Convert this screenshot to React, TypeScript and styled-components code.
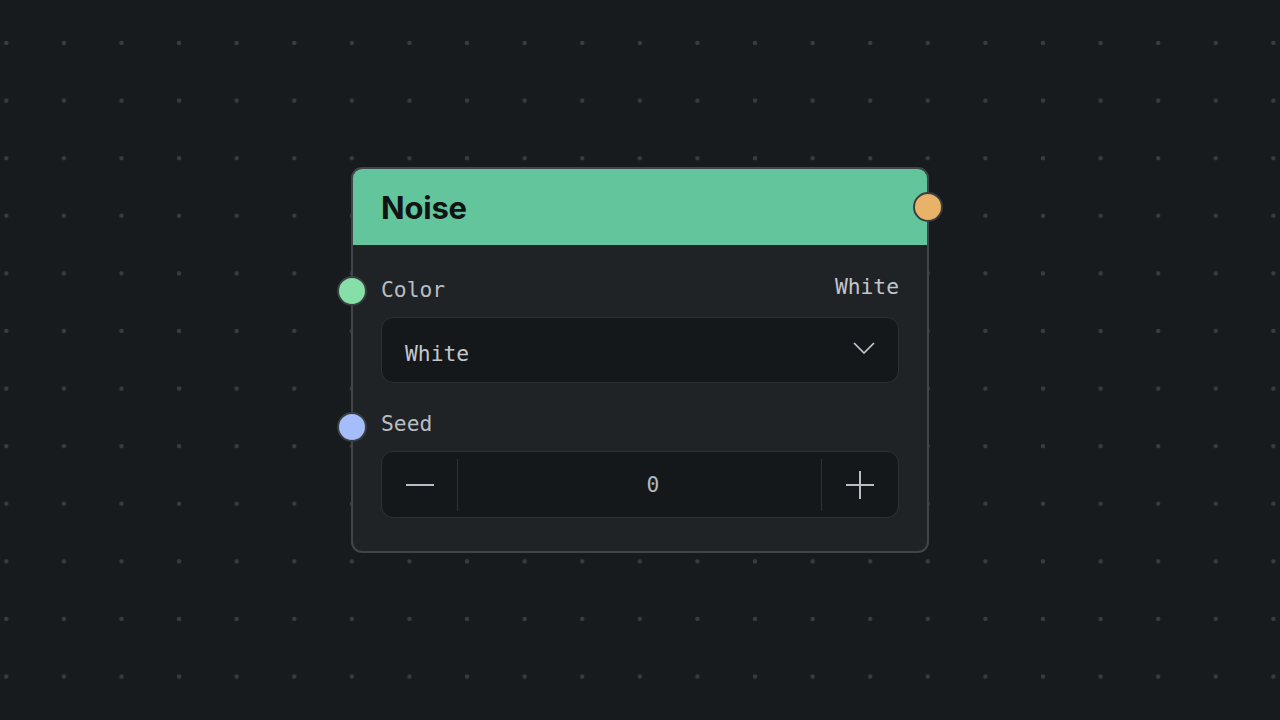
import React, { useState } from "react";
import styled, { createGlobalStyle } from "styled-components";

const GlobalStyle = createGlobalStyle`
    html, body {
        margin: 0;
        padding: 0;
        background: #181b1e;
    }
`;

const mono = `"DejaVu Sans Mono", "Liberation Mono", monospace`;

const Canvas = styled.div`
    width: 100vw;
    height: 100vh;
    display: flex;
    align-items: center;
    justify-content: center;
    background-color: #181b1e;
    background-image: radial-gradient(circle, #393c40 0, #393c40 1.8px, transparent 2.6px);
    background-size: 57.6px 57.6px;
    background-position: -22.5px 14.2px;
`;

const Node = styled.div`
    position: relative;
    box-sizing: border-box;
    width: 578px;
    background: #202326;
    border: 2px solid #414449;
    border-radius: 11px;
`;

const Header = styled.div`
    position: relative;
    height: 76px;
    display: flex;
    align-items: center;
    padding: 0 28px;
    background: #63c59c;
    border-radius: 9px 9px 0 0;
    font-family: Inter, "Noto Sans", sans-serif;
    font-weight: 700;
    font-size: 31px;
    color: #111315;
    letter-spacing: -0.2px;
`;

const Handle = styled.span<{ fill: string; side: "left" | "right"; offset: number }>`
    position: absolute;
    top: 50%;
    ${ props => props.side }: ${ props => props.offset }px;
    width: 26px;
    height: 26px;
    margin-top: -15px;
    border-radius: 50%;
    background: ${ props => props.fill };
    border: 2px solid #3a3d42;
`;

const Body = styled.div`
    display: flex;
    flex-direction: column;
    gap: 25px;
    padding: 29px 28px 33px;
`;

const Field = styled.div`
    display: flex;
    flex-direction: column;
    gap: 13px;
`;

const LabelRow = styled.div`
    position: relative;
    height: 30px;
    display: flex;
    align-items: center;
    justify-content: space-between;
    font-family: ${ mono };
    font-size: 21.3px;
    color: #b8bdc4;
`;

const Value = styled.span`
    margin-bottom: 5px;
    color: #c2c6cc;
`;

const Select = styled.div`
    box-sizing: border-box;
    height: 66px;
    display: flex;
    align-items: center;
    justify-content: space-between;
    padding: 6px 23px 0 23px;
    background: #15181b;
    border: 1.5px solid #2d3035;
    border-radius: 12px;
    font-family: ${ mono };
    font-size: 21.3px;
    color: #c3c7cc;
`;

const Chevron = styled.svg`
    margin-top: -10px;
`;

const Stepper = styled.div`
    box-sizing: border-box;
    height: 67px;
    display: grid;
    grid-template-columns: 76px 1fr 77px;
    background: #15181b;
    border: 1.5px solid #2d3035;
    border-radius: 12px;
`;

const StepButton = styled.button<{ divider: "left" | "right" }>`
    position: relative;
    display: flex;
    align-items: center;
    justify-content: center;
    padding: 0;
    background: none;
    border: none;
    color: #b9bec4;
    cursor: pointer;

    &::after {
        content: "";
        position: absolute;
        top: 7px;
        bottom: 6px;
        ${ props => props.divider }: 0;
        width: 1px;
        background: #2e3136;
    }
`;

const StepValue = styled.div`
    display: flex;
    align-items: center;
    justify-content: center;
    padding-left: 27px;
    font-family: ${ mono };
    font-size: 21.3px;
    color: #b3b8be;
`;

const App: React.FC = () => {
    const [seed, setSeed] = useState(0);

    return <>
        <GlobalStyle/>
        <Canvas>
            <Node>
                <Header>
                    Noise
                    <Handle fill="#e8b268" side="right" offset={ -16 }/>
                </Header>
                <Body>
                    <Field>
                        <LabelRow>
                            <Handle fill="#86dfa6" side="left" offset={ -44 } style={{ marginTop: -13 }}/>
                            <span>Color</span>
                            <Value>White</Value>
                        </LabelRow>
                        <Select>
                            <span>White</span>
                            <Chevron width="22" height="12" viewBox="0 0 22 12" fill="none">
                                <polyline points="1,1 11,11 21,1" stroke="#c3c7cc" strokeWidth="1.7"/>
                            </Chevron>
                        </Select>
                    </Field>
                    <Field>
                        <LabelRow>
                            <Handle fill="#a6bdfc" side="left" offset={ -44 } style={{ marginTop: -11 }}/>
                            <span>Seed</span>
                        </LabelRow>
                        <Stepper>
                            <StepButton divider="right" onClick={ () => setSeed(seed - 1) }>
                                <svg width="30" height="30" viewBox="0 0 30 30">
                                    <line x1="1" y1="15" x2="29" y2="15" stroke="currentColor" strokeWidth="2"/>
                                </svg>
                            </StepButton>
                            <StepValue>{ seed }</StepValue>
                            <StepButton divider="left" onClick={ () => setSeed(seed + 1) }>
                                <svg width="30" height="30" viewBox="0 0 30 30">
                                    <line x1="1" y1="15" x2="29" y2="15" stroke="currentColor" strokeWidth="2"/>
                                    <line x1="15" y1="1" x2="15" y2="29" stroke="currentColor" strokeWidth="2"/>
                                </svg>
                            </StepButton>
                        </Stepper>
                    </Field>
                </Body>
            </Node>
        </Canvas>
    </>;
};

export default App;
